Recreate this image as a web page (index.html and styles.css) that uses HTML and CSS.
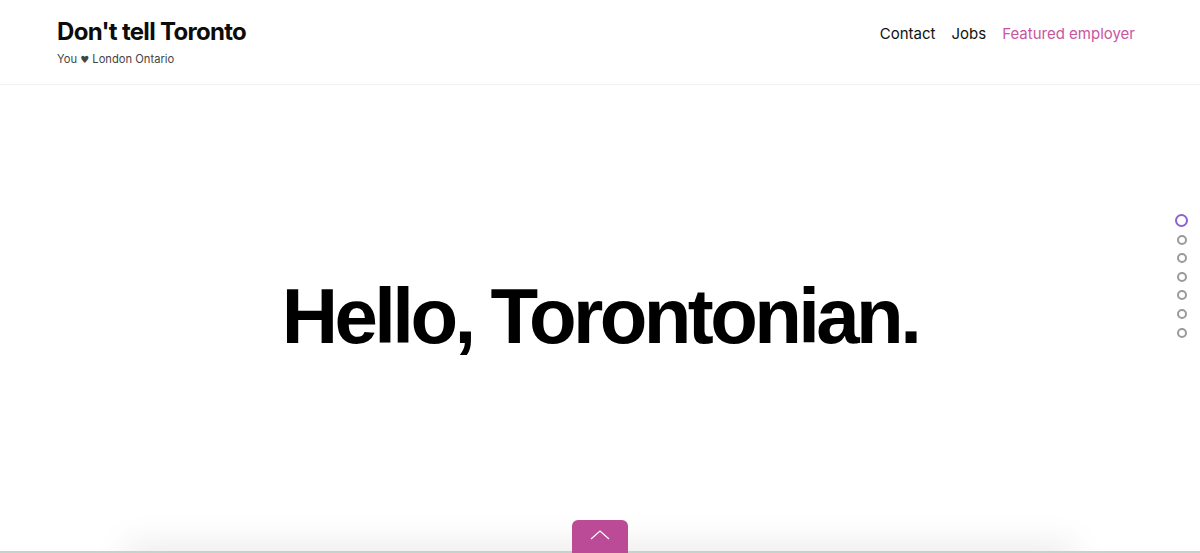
FILE: index.html
```html
<!DOCTYPE html>
<html lang="en">
<head>
  <meta charset="UTF-8" />
  <meta name="viewport" content="width=device-width, initial-scale=1.0"/>
  <title>Don't tell Toronto</title>
  <link rel="stylesheet" href="styles.css">
</head>

<body>
  <header class="site-header">
    <div class="brand">
      <a class="brand-title" href="#">Don't tell Toronto</a>
      <p class="brand-tagline">You <span class="heart">♥</span> London Ontario</p>
    </div>
    <nav class="main-nav">
      <a href="#">Contact</a>
      <a href="#">Jobs</a>
      <a href="#" class="featured">Featured employer</a>
    </nav>
  </header>

  <main class="hero">
    <h1>Hello, Torontonian.</h1>

    <!-- section dots -->
    <ul class="dots">
      <li class="active"></li>
      <li></li>
      <li></li>
      <li></li>
      <li></li>
      <li></li>
      <li></li>
    </ul>

    <a class="to-top" href="#">
      <svg width="20" height="10" viewBox="0 0 20 10">
        <polyline points="1,9 10,1 19,9" fill="none" stroke="#fff" stroke-width="1.2"/>
      </svg>
    </a>
  </main>

  <section class="next">
    <div class="next-card"></div>
  </section>
</body>
</html>
```

FILE: styles.css
```css
* {
  box-sizing: border-box;
}
html, body {
  height: 553px;
  overflow: hidden;
}
body {
  margin: 0;
  font-family: Inter, "Noto Sans", sans-serif;
  color: #111;
  background: #fff;
}
a {
  text-decoration: none;
  color: inherit;
}
.site-header {
  height: 85px;
  display: flex;
  justify-content: space-between;
  align-items: flex-start;
  padding: 0 65px 0 57px;
  border-bottom: 1px solid #f1f1f1;
}
.brand {
  padding-top: 17px;
}
.brand-title {
  display: block;
  font-size: 24px;
  font-weight: 700;
  letter-spacing: -0.7px;
  color: #0c0c0c;
  line-height: 30px;
}
.brand-tagline {
  margin: 4px 0 0;
  font-size: 11.2px;
  color: #444;
  line-height: 16px;
}
.heart {
  font-size: 10px;
  font-family: "DejaVu Sans", sans-serif;
}
.main-nav {
  display: flex;
  gap: 16px;
  padding-top: 24px;
  font-size: 15px;
  line-height: 20px;
}
.main-nav .featured {
  color: #c9559f;
}
.hero {
  position: relative;
  height: 468px;
  display: flex;
  align-items: center;
  justify-content: center;
  border-bottom: 2px solid #c3d3ce;
}
.hero h1 {
  margin: 0 0 4px;
  font-family: "Liberation Sans", Arial, sans-serif;
  font-weight: 700;
  font-size: 78px;
  letter-spacing: -3.6px;
  color: #000;
}
.dots {
  position: absolute;
  right: 12px;
  top: 129px;
  margin: 0;
  padding: 0;
  list-style: none;
  display: flex;
  flex-direction: column;
  align-items: center;
  gap: 8.6px;
}
.dots li {
  width: 10px;
  height: 10px;
  border: 2px solid #9a9a9a;
  border-radius: 50%;
}
.dots li.active {
  width: 13px;
  height: 13px;
  border: 2px solid #8a63d2;
  margin-bottom: -1px;
}
.to-top {
  position: absolute;
  left: 572px;
  bottom: -2px;
  width: 56px;
  height: 33px;
  background: #bb4b96;
  border-radius: 6px 6px 0 0;
  display: flex;
  justify-content: center;
  padding-top: 10px;
  z-index: 2;
}
.next {
  padding: 0 125px;
}
.next-card {
  height: 40px;
  background: #fff;
  box-shadow: 0 -10px 34px rgba(0, 0, 0, 0.08);
}
```
